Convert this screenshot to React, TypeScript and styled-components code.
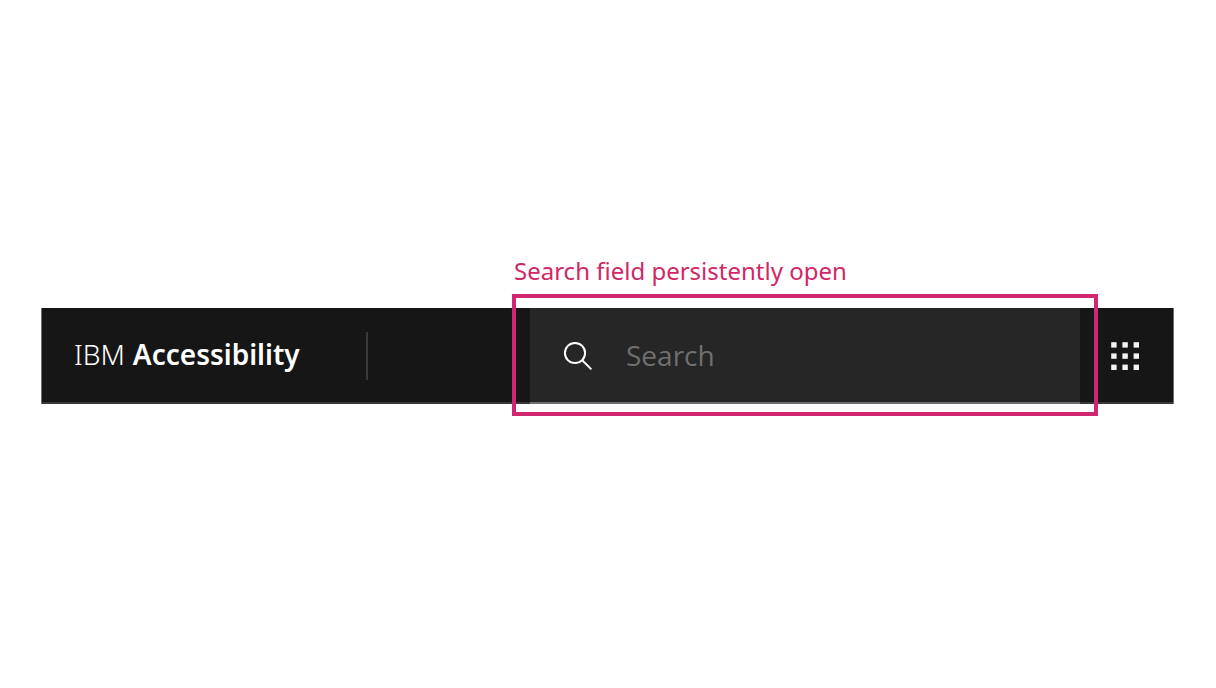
import React from "react";
import styled, { createGlobalStyle } from "styled-components";

const GlobalStyle = createGlobalStyle`
  *, *::before, *::after { box-sizing: border-box; }
  body {
    margin: 0;
    background: #ffffff;
    font-family: "Noto Sans", "Open Sans", sans-serif;
  }
`;

const Page = styled.main`
  padding: 308px 42px 48px 41px;
`;

const Header = styled.header`
  display: flex;
  align-items: stretch;
  height: 96px;
  background: #161616;
  border: solid #6f6f6f;
  border-width: 0 1px;
  box-shadow: inset 0 -2px #393939;
`;

const Brand = styled.a`
  display: flex;
  align-items: center;
  gap: 8px;
  padding: 0 66px 4px 32px;
  color: #ffffff;
  font-size: 28px;
  font-weight: 300;
  line-height: 36px;
  text-decoration: none;
  white-space: nowrap;
`;

const Product = styled.strong`
  font-weight: 600;
`;

const Divider = styled.span`
  align-self: center;
  width: 2px;
  height: 48px;
  background: #393939;
`;

const SearchArea = styled.div`
  position: relative;
  flex: 0 1 550px;
  margin-left: auto;
`;

const SearchField = styled.label`
  display: flex;
  align-items: center;
  gap: 32px;
  height: 96px;
  padding-left: 32px;
  background: #262626;
  border-bottom: 2px solid #6f6f6f;
`;

const SearchInput = styled.input`
  flex: 1;
  min-width: 0;
  height: 40px;
  padding: 0;
  border: 0;
  outline: 0;
  background: transparent;
  color: #f4f4f4;
  font: 400 28px/40px "Open Sans", "Noto Sans", sans-serif;

  &::placeholder {
    color: #6f6f6f;
    opacity: 1;
  }
`;

const Highlight = styled.div`
  position: absolute;
  inset: -14px -18px -12px;
  border: 4px solid #d12771;
  pointer-events: none;
`;

const Note = styled.p`
  position: absolute;
  bottom: 100%;
  left: -16px;
  margin: 0 0 21px;
  color: #d12765;
  font-size: 24px;
  line-height: 32px;
  white-space: nowrap;
`;

const SwitcherButton = styled.button`
  display: grid;
  place-items: center;
  width: 93px;
  padding: 0 4px 0 0;
  border: 0;
  background: transparent;
  color: #f4f4f4;
`;

const Icon = styled.svg`
  display: block;
  flex: none;
  width: 32px;
  height: 32px;
`;

const dots = [2.2, 13.4, 24.6];

export default function App() {
  return (
    <>
      <GlobalStyle />
      <Page>
        <Header>
          <Brand href="#">
            IBM <Product>Accessibility</Product>
          </Brand>
          <Divider />
          <SearchArea>
            <SearchField>
              <Icon viewBox="0 0 32 32" fill="none" stroke="#ffffff" strokeWidth="2" aria-hidden="true">
                <circle cx="13" cy="14" r="10.1" />
                <path d="M20.2 21.2 29.4 30.4" />
              </Icon>
              <SearchInput type="search" placeholder="Search" aria-label="Search" />
            </SearchField>
            <Highlight />
            <Note>Search field persistently open</Note>
          </SearchArea>
          <SwitcherButton type="button" aria-label="App switcher">
            <Icon viewBox="0 0 32 32" fill="currentColor" aria-hidden="true">
              {dots.map((y) =>
                dots.map((x) => <rect key={`${x}-${y}`} x={x} y={y} width="5.4" height="5.4" />)
              )}
            </Icon>
          </SwitcherButton>
        </Header>
      </Page>
    </>
  );
}
